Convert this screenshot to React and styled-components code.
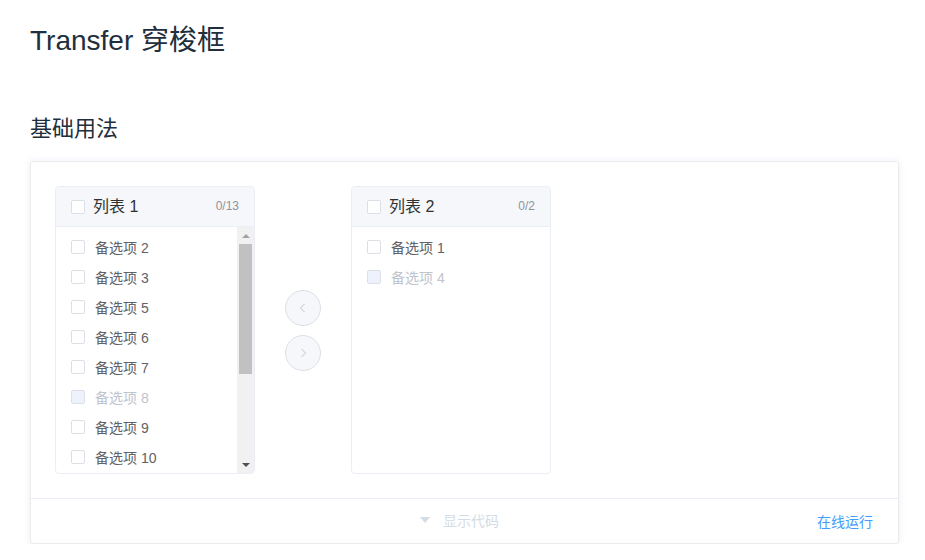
import React from "react";
import styled, { createGlobalStyle } from "styled-components";

const GlobalStyle = createGlobalStyle`
  body {
    margin: 0;
    background: #fff;
    font-family: "Liberation Sans", Arial, "Noto Sans CJK SC", sans-serif;
  }
`;

const Page = styled.div`
  padding: 0 26px 0 30px;
`;

const Title = styled.h2`
  margin: 20px 0 0;
  font-size: 28px;
  line-height: 42px;
  font-weight: 400;
  color: #1f2f3d;
`;

const Section = styled.h3`
  margin: 50px 0 16px;
  font-size: 22px;
  line-height: 33px;
  font-weight: 400;
  color: #1f2f3d;
`;

const DemoBlock = styled.div`
  border: 1px solid #ebebeb;
  border-radius: 3px;
  box-shadow: 0 0 8px 0 rgba(232, 237, 250, 0.6), 0 2px 4px 0 rgba(232, 237, 250, 0.5);
`;

const Source = styled.div`
  padding: 24px;
`;

const Transfer = styled.div`
  display: flex;
  align-items: center;
`;

const Panel = styled.div`
  width: 200px;
  box-sizing: border-box;
  border: 1px solid #ebeef5;
  border-radius: 4px;
  background: #fff;
  overflow: hidden;
`;

const PanelHeader = styled.div`
  height: 40px;
  box-sizing: border-box;
  background: #f5f7fa;
  border-bottom: 1px solid #ebeef5;
  padding: 0 15px;
  display: flex;
  align-items: center;
`;

const HeaderLabel = styled.span`
  margin-left: 8px;
  padding-bottom: 3px;
  font-size: 16px;
  color: #303133;
  flex: 1;
`;

const Count = styled.span`
  padding-bottom: 1px;
  font-size: 12px;
  color: #909399;
`;

const PanelBody = styled.div`
  height: 246px;
  display: flex;
`;

const List = styled.div`
  flex: 1;
  padding-top: 5px;
  overflow: hidden;
`;

const Item = styled.div`
  height: 30px;
  padding-left: 15px;
  display: flex;
  align-items: center;
  font-size: 14px;
  color: ${(p) => (p.disabled ? "#c0c4cc" : "#606266")};
`;

const ItemLabel = styled.span`
  margin-left: 10px;
`;

const Box = styled.span`
  width: 14px;
  height: 14px;
  box-sizing: border-box;
  border: 1px solid #dcdfe6;
  border-radius: 2px;
  background: ${(p) => (p.disabled ? "#edf2fc" : "#fff")};
  flex-shrink: 0;
`;

const Scrollbar = styled.div`
  width: 17px;
  background: #f1f1f1;
  display: flex;
  flex-direction: column;
`;

const ScrollButton = styled.div`
  height: 17px;
  display: flex;
  align-items: center;
  justify-content: center;
  &::after {
    content: "";
    border-left: 4px solid transparent;
    border-right: 4px solid transparent;
    ${(p) =>
      p.down
        ? "border-top: 4px solid #505050;"
        : "border-bottom: 4px solid #a3a3a3;"}
  }
`;

const Thumb = styled.div`
  height: 130px;
  margin: 0 2px;
  background: #c1c1c1;
`;

const Track = styled.div`
  flex: 1;
`;

const Buttons = styled.div`
  padding: 0 30px;
  display: flex;
  flex-direction: column;
  gap: 9px;
`;

const RoundButton = styled.button`
  width: 36px;
  height: 36px;
  padding: 0;
  border: 1px solid #dcdfe6;
  border-radius: 50%;
  background: #f5f7fa;
  display: flex;
  align-items: center;
  justify-content: center;
  cursor: not-allowed;
`;

const Control = styled.div`
  height: 44px;
  border-top: 1px solid #eaeefb;
  display: grid;
  grid-template-columns: 1fr auto 1fr;
  align-items: center;
  font-size: 14px;
`;

const Toggle = styled.div`
  grid-column: 2;
  display: flex;
  align-items: center;
  gap: 13px;
  margin: 0 10px 2px 0;
  color: #d3dce6;
  &::before {
    content: "";
    border-left: 5px solid transparent;
    border-right: 5px solid transparent;
    border-top: 6px solid #d3dce6;
  }
`;

const RunLink = styled.a`
  justify-self: end;
  padding: 0 25px 1px 0;
  color: #409eff;
  text-decoration: none;
`;

const Chevron = ({ dir }) => (
  <svg width="12" height="12" viewBox="0 0 12 12">
    <polyline
      points={dir === "left" ? "7.5,2 3.5,6 7.5,10" : "4.5,2 8.5,6 4.5,10"}
      fill="none"
      stroke="#c0c4cc"
      strokeWidth="1"
    />
  </svg>
);

const left = [
  { label: "备选项 2" },
  { label: "备选项 3" },
  { label: "备选项 5" },
  { label: "备选项 6" },
  { label: "备选项 7" },
  { label: "备选项 8", disabled: true },
  { label: "备选项 9" },
  { label: "备选项 10" },
];

const right = [{ label: "备选项 1" }, { label: "备选项 4", disabled: true }];

const TransferPanel = ({ title, count, items, scroll }) => (
  <Panel>
    <PanelHeader>
      <Box />
      <HeaderLabel>{title}</HeaderLabel>
      <Count>{count}</Count>
    </PanelHeader>
    <PanelBody>
      <List>
        {items.map((it) => (
          <Item key={it.label} disabled={it.disabled}>
            <Box disabled={it.disabled} />
            <ItemLabel>{it.label}</ItemLabel>
          </Item>
        ))}
      </List>
      {scroll && (
        <Scrollbar>
          <ScrollButton />
          <Thumb />
          <Track />
          <ScrollButton down />
        </Scrollbar>
      )}
    </PanelBody>
  </Panel>
);

export default function App() {
  return (
    <Page>
      <GlobalStyle />
      <Title>Transfer 穿梭框</Title>
      <Section>基础用法</Section>
      <DemoBlock>
        <Source>
          <Transfer>
            <TransferPanel title="列表 1" count="0/13" items={left} scroll />
            <Buttons>
              <RoundButton disabled>
                <Chevron dir="left" />
              </RoundButton>
              <RoundButton disabled>
                <Chevron dir="right" />
              </RoundButton>
            </Buttons>
            <TransferPanel title="列表 2" count="0/2" items={right} />
          </Transfer>
        </Source>
        <Control>
          <Toggle>显示代码</Toggle>
          <RunLink href="#">在线运行</RunLink>
        </Control>
      </DemoBlock>
    </Page>
  );
}
